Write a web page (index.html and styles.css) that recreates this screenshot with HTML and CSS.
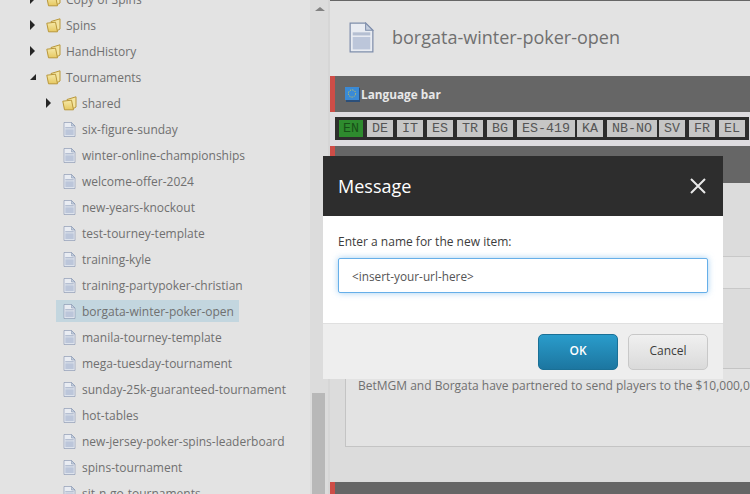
FILE: index.html
```html
<!DOCTYPE html>
<html lang="en">
<head>
    <meta charset="UTF-8">
    <meta name="viewport" content="width=device-width, initial-scale=1.0">
    <title>Message</title>
    <link rel="stylesheet" href="styles.css">
</head>
<body>

<!-- Icons used by the tree and the header -->
<svg class="icon-defs" width="0" height="0">
    <defs>
        <linearGradient id="folder-fill" x1="0" y1="0" x2="0" y2="1">
            <stop offset="0" stop-color="#f6e9a8"/>
            <stop offset="1" stop-color="#e6c861"/>
        </linearGradient>
    </defs>
    <symbol id="icon-doc" viewBox="0 0 24 30">
        <path d="M1 1H16L23 8V29H1Z" fill="#e9ecf2" stroke="#7f8eab" stroke-width="1.2"/>
        <path d="M16 1V8H23Z" fill="#c4cede" stroke="#7f8eab" stroke-width="1"/>
        <rect x="3.5" y="10" width="17" height="3" fill="#b5bfd2"/>
        <rect x="3.5" y="14.5" width="17" height="12" fill="#bcc6da"/>
    </symbol>
    <symbol id="icon-folder" viewBox="0 0 15 15">
        <path d="M5 3.5L14 .8V11L11.5 12.5Z" fill="#f3e4a0" stroke="#b9973a" stroke-width="1"/>
        <path d="M.8 5.2L9.5 4.2L11.5 13.8H2.5Z" fill="url(#folder-fill)" stroke="#b9973a" stroke-width="1"/>
    </symbol>
</svg>

<div class="app">
    <!-- Content tree -->
    <nav class="tree">
        <div class="row lvl1"><span class="arrow"></span><svg class="folder"><use href="#icon-folder"/></svg><span>Copy of Spins</span></div>
        <div class="row lvl1"><span class="arrow"></span><svg class="folder"><use href="#icon-folder"/></svg><span>Spins</span></div>
        <div class="row lvl1"><span class="arrow"></span><svg class="folder"><use href="#icon-folder"/></svg><span>HandHistory</span></div>
        <div class="row lvl1"><span class="arrow open"></span><svg class="folder"><use href="#icon-folder"/></svg><span>Tournaments</span></div>
        <div class="row lvl2"><span class="arrow"></span><svg class="folder"><use href="#icon-folder"/></svg><span>shared</span></div>
        <div class="row lvl2"><svg class="doc"><use href="#icon-doc"/></svg><span>six-figure-sunday</span></div>
        <div class="row lvl2"><svg class="doc"><use href="#icon-doc"/></svg><span>winter-online-championships</span></div>
        <div class="row lvl2"><svg class="doc"><use href="#icon-doc"/></svg><span>welcome-offer-2024</span></div>
        <div class="row lvl2"><svg class="doc"><use href="#icon-doc"/></svg><span>new-years-knockout</span></div>
        <div class="row lvl2"><svg class="doc"><use href="#icon-doc"/></svg><span>test-tourney-template</span></div>
        <div class="row lvl2"><svg class="doc"><use href="#icon-doc"/></svg><span>training-kyle</span></div>
        <div class="row lvl2"><svg class="doc"><use href="#icon-doc"/></svg><span>training-partypoker-christian</span></div>
        <div class="row lvl2 selected"><svg class="doc"><use href="#icon-doc"/></svg><span>borgata-winter-poker-open</span></div>
        <div class="row lvl2"><svg class="doc"><use href="#icon-doc"/></svg><span>manila-tourney-template</span></div>
        <div class="row lvl2"><svg class="doc"><use href="#icon-doc"/></svg><span>mega-tuesday-tournament</span></div>
        <div class="row lvl2"><svg class="doc"><use href="#icon-doc"/></svg><span>sunday-25k-guaranteed-tournament</span></div>
        <div class="row lvl2"><svg class="doc"><use href="#icon-doc"/></svg><span>hot-tables</span></div>
        <div class="row lvl2"><svg class="doc"><use href="#icon-doc"/></svg><span>new-jersey-poker-spins-leaderboard</span></div>
        <div class="row lvl2"><svg class="doc"><use href="#icon-doc"/></svg><span>spins-tournament</span></div>
        <div class="row lvl2"><svg class="doc"><use href="#icon-doc"/></svg><span>sit-n-go-tournaments</span></div>
    </nav>

    <div class="scrollbar">
        <div class="scroll-up"></div>
        <div class="scroll-thumb"></div>
    </div>

    <!-- Item editor -->
    <main class="editor">
        <header class="item-header">
            <svg class="item-icon"><use href="#icon-doc"/></svg>
            <h1 class="item-title">borgata-winter-poker-open</h1>
        </header>

        <div class="section-bar">
            <svg class="flag" viewBox="0 0 15 15">
                <rect x="1" y="1" width="14" height="14" fill="#2b4f7a"/>
                <rect width="14" height="13" fill="#3a8ad6"/>
                <circle cx="7" cy="6.5" r="3.6" fill="none" stroke="#d8c94a" stroke-dasharray="1.2 1.2"/>
            </svg>
            <span>Language bar</span>
        </div>

        <div class="lang-strip">
            <div class="lang-bar">
                <button class="lang active">EN</button>
                <button class="lang">DE</button>
                <button class="lang">IT</button>
                <button class="lang">ES</button>
                <button class="lang">TR</button>
                <button class="lang">BG</button>
                <button class="lang lang-tight">ES-419</button>
                <button class="lang">KA</button>
                <button class="lang lang-tight">NB-NO</button>
                <button class="lang">SV</button>
                <button class="lang">FR</button>
                <button class="lang">EL</button>
            </div>
        </div>

        <div class="section-bar section-short"></div>

        <div class="fields">
            <div class="field-input"></div>
            <div class="field-text">BetMGM and Borgata have partnered to send players to the $10,000,000 WSOP Main Event</div>
        </div>

        <div class="section-bar"></div>
    </main>
</div>

<!-- Dialog over the page -->
<div class="dialog">
    <div class="dialog-head">
        <span class="dialog-title">Message</span>
        <svg class="dialog-close" viewBox="0 0 16 16"><path d="M1 1L15 15M15 1L1 15" stroke="#e8e8e8" stroke-width="2"/></svg>
    </div>
    <div class="dialog-body">
        <label class="dialog-label" for="itemName">Enter a name for the new item:</label>
        <input class="dialog-input" id="itemName" type="text" value="&lt;insert-your-url-here&gt;">
    </div>
    <div class="dialog-foot">
        <button class="btn btn-ok">OK</button>
        <button class="btn btn-cancel">Cancel</button>
    </div>
</div>

</body>
</html>
```

FILE: styles.css
```css
/* General styling */
html, body {
    height: 100%;
}

body {
    margin: 0;
    overflow: hidden;
    position: relative;
    font-family: 'Open Sans', sans-serif;
    font-size: 12px;
    color: rgb(112, 112, 112);
    background-color: rgb(227, 227, 227);
}

.icon-defs {
    position: absolute;
}

.app {
    display: flex;
    height: 494px;
    overflow: hidden;
}

/* Content tree */
.tree {
    width: 310px;
    flex-shrink: 0;
    margin-top: -14px;
    background-color: rgb(227, 227, 227);
}

.row {
    display: flex;
    align-items: center;
    height: 26px;
    white-space: nowrap;
    box-sizing: border-box;
}

.lvl1 {
    padding-left: 30px;
}

.lvl2 {
    padding-left: 46px;
}

.arrow {
    width: 0;
    height: 0;
    margin-right: 11px;
    border-style: solid;
    border-width: 5px 0 5px 5px;
    border-color: transparent transparent transparent rgb(38, 38, 38);
}

.arrow.open {
    margin-right: 10px;
    border-width: 0 0 6px 6px;
    border-color: transparent transparent rgb(38, 38, 38) transparent;
}

.folder {
    width: 15px;
    height: 15px;
    margin-right: 5px;
}

.doc {
    width: 13px;
    height: 15px;
    margin-left: 17px;
    margin-right: 6px;
}

.row.selected {
    position: relative;
}

.row.selected::before {
    content: "";
    position: absolute;
    left: 56px;
    top: 2px;
    width: 183px;
    height: 22px;
    background-color: rgb(195, 214, 223);
}

.row.selected > * {
    position: relative;
}

/* Scrollbar of the tree */
.scrollbar {
    width: 20px;
    flex-shrink: 0;
    box-sizing: border-box;
    background-color: rgb(220, 220, 220);
    border-right: 2px solid rgb(214, 214, 214);
    position: relative;
}

.scroll-up {
    width: 0;
    margin: 7px 0 0 5px;
    border-style: solid;
    border-width: 0 5px 4px 5px;
    border-color: transparent transparent rgb(130, 130, 130) transparent;
}

.scroll-thumb {
    width: 13px;
    height: 101px;
    margin: 382px 0 0 2px;
    background-color: rgb(184, 184, 184);
}

/* Item editor */
.editor {
    flex: 1;
    min-width: 0;
    display: flex;
    flex-direction: column;
    background-color: rgb(220, 220, 220);
    border-top: 1px solid rgb(102, 102, 102);
}

.item-header {
    height: 75px;
    flex-shrink: 0;
    display: flex;
    align-items: center;
    padding-left: 19px;
    padding-bottom: 3px;
    box-sizing: border-box;
    background-color: rgb(227, 227, 227);
}

.item-icon {
    width: 25px;
    height: 31px;
}

.item-title {
    margin: 0 0 0 18px;
    font-size: 18px;
    font-weight: 400;
    color: rgb(112, 112, 112);
}

.section-bar {
    height: 36px;
    flex-shrink: 0;
    display: flex;
    align-items: center;
    padding-left: 15px;
    box-sizing: border-box;
    background-color: rgb(102, 102, 102);
    border-left: 5px solid rgb(206, 77, 71);
    font-weight: 700;
    font-size: 11.8px;
    color: rgb(232, 232, 232);
}

.section-bar .flag {
    width: 15px;
    height: 15px;
    margin-right: 1px;
    margin-left: -5px;
}

.section-short {
    height: 37px;
}

/* Language buttons */
.lang-strip {
    height: 34px;
    flex-shrink: 0;
    box-sizing: border-box;
    padding: 5px 0 0 5px;
    background-color: rgb(222, 220, 224);
    overflow: hidden;
}

.lang-bar {
    display: flex;
    gap: 4px;
    width: max-content;
    height: 23px;
    padding: 3px 4px;
    box-sizing: border-box;
    background-color: rgb(45, 45, 45);
}

.lang {
    height: 17px;
    padding: 0 5px;
    border: none;
    border-radius: 0;
    font-family: 'Liberation Mono', monospace;
    font-size: 13.33px;
    line-height: 17px;
    color: rgb(85, 85, 85);
    background-color: rgb(198, 198, 198);
}

.lang-tight {
    margin-right: -2px;
}

.lang.active {
    padding: 0 4px;
    background-color: rgb(46, 139, 46);
    color: rgb(24, 80, 24);
}

/* Fields behind the dialog */
.fields {
    flex: none;
    height: 299px;
    box-sizing: border-box;
    padding: 73px 0 0 15px;
}

.field-input {
    height: 33px;
    box-sizing: border-box;
    background-color: rgb(227, 227, 227);
    border-top: 1px solid rgb(200, 200, 200);
    border-bottom: 1px solid rgb(200, 200, 200);
}

.field-text {
    height: 79px;
    margin-top: 79px;
    padding: 8px 12px;
    box-sizing: border-box;
    white-space: nowrap;
    overflow: hidden;
    background-color: rgb(227, 227, 227);
    border: 1px solid rgb(196, 196, 196);
    border-right: none;
}

/* Dialog */
.dialog {
    position: absolute;
    left: 323px;
    top: 156px;
    width: 400px;
    display: flex;
    flex-direction: column;
    background-color: white;
}

.dialog-head {
    height: 60px;
    display: flex;
    align-items: center;
    justify-content: space-between;
    padding: 0 17px 0 15px;
    background-color: rgb(45, 45, 45);
}

.dialog-title {
    font-size: 18px;
    color: white;
}

.dialog-close {
    width: 16px;
    height: 16px;
}

.dialog-body {
    height: 107px;
    padding: 17px 15px 0;
    box-sizing: border-box;
}

.dialog-label {
    display: block;
    font-size: 12px;
    line-height: 17px;
    color: rgb(60, 60, 60);
    margin-bottom: 8px;
}

.dialog-input {
    display: block;
    width: 100%;
    height: 35px;
    padding: 0 13px;
    box-sizing: border-box;
    border: 1px solid rgb(102, 175, 233);
    border-radius: 2px;
    outline: none;
    box-shadow: 0 0 6px rgba(102, 175, 233, 0.6);
    font-family: 'Open Sans', sans-serif;
    font-size: 11.8px;
    color: rgb(85, 85, 85);
}

.dialog-foot {
    height: 56px;
    display: flex;
    justify-content: flex-end;
    align-items: center;
    gap: 10px;
    padding: 0 15px;
    box-sizing: border-box;
    background-color: rgb(238, 238, 238);
    border-top: 1px solid rgb(224, 224, 224);
}

.btn {
    width: 80px;
    height: 36px;
    padding-bottom: 4px;
    box-sizing: border-box;
    border-radius: 5px;
    font-family: 'Open Sans', sans-serif;
    font-size: 12px;
    cursor: pointer;
}

.btn-ok {
    font-weight: 600;
    color: white;
    border: 1px solid rgb(26, 112, 150);
    background: linear-gradient(rgb(42, 156, 203), rgb(28, 118, 160));
}

.btn-cancel {
    color: rgb(60, 60, 60);
    border: 1px solid rgb(200, 200, 200);
    background: linear-gradient(rgb(240, 240, 240), rgb(218, 218, 218));
}
```
